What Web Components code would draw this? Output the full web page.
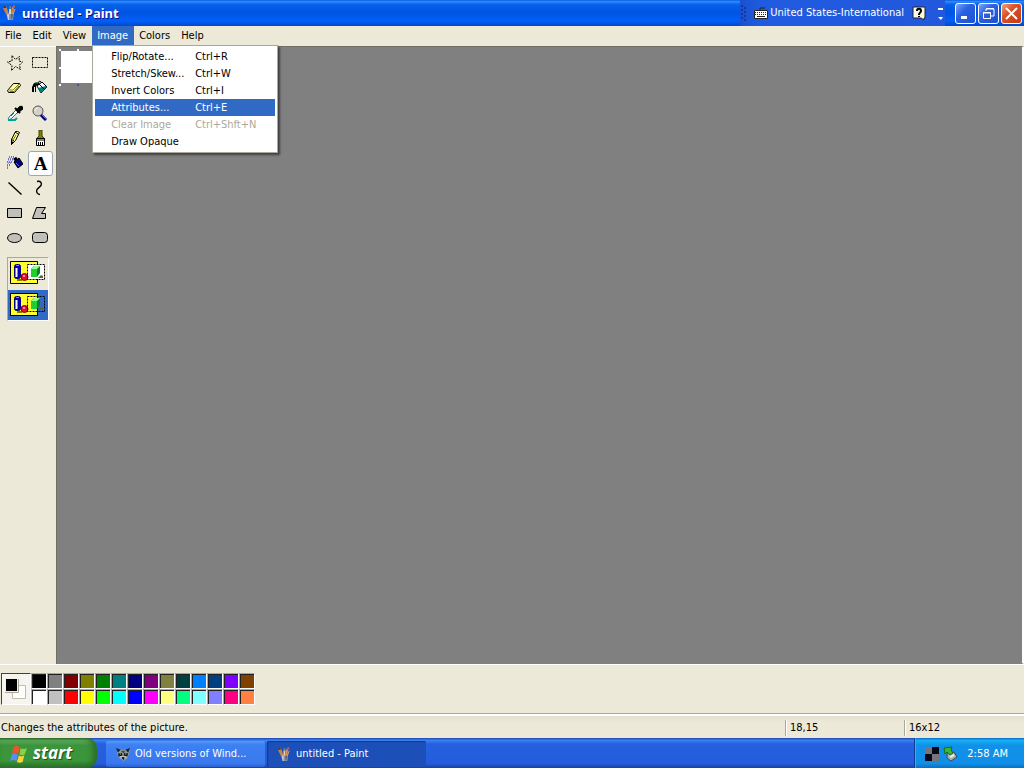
<!DOCTYPE html>
<html lang="en">
<head>
<meta charset="utf-8">
<title>untitled - Paint</title>
<style>
    html, body { height: 100%; }
    body {
        margin: 0;
        overflow: hidden;
        font: 11px/16px "DejaVu Sans Condensed", "Open Sans", sans-serif;
        color: #000;
        --face: #ece9d8;
        --shadow: #aca899;
        --highlight: #316ac5;
    }
</style>
</head>
<body>
<paint-desktop></paint-desktop>

<script>
const ICONS = {
    paint: '<path d="M4 8h8l-1 7H6z" fill="#8a94a8"/><path d="M5 9h2v6H6z" fill="#c8d0dc"/><path d="M9 9h2l-1 5H9z" fill="#566078"/><path d="M3 1l3 8M2 3l3 6" stroke="#c0854a" stroke-width="2"/><path d="M8 3v6" stroke="#e8d8b0" stroke-width="2"/><path d="M11 2l-1 7" stroke="#d88850" stroke-width="2"/><path d="M13 4l-2 5" stroke="#e0a870"/><path d="M2 1h2v2H2z" fill="#503830"/><path d="M7 1h2v3H7z" fill="#5c7890"/><path d="M11 0h2v3h-2z" fill="#ca5038"/>',
    star: '<path d="M5 .5l3.500 4 4-3-.5 4.500 3.500 1-3 3 1 4.500-5-3-4 4 .5-5-4.500-3.500 4.500-1z" fill="none" stroke="#000" stroke-dasharray="2 1"/>',
    select: '<path d="M.5 2.500h15v10H.5z" fill="none" stroke="#000" stroke-dasharray="2 1"/>',
    eraser: '<path d="M.5 10.500l6-7h6l1 2-6 7h-6z" fill="#ffffa0" stroke="#000"/><path d="M1 10h5l6-6" fill="none" stroke="#808040"/><path d="M2 11l5 0 5-6v2l-5 5H3z" fill="#808000"/>',
    fill: '<path d="M5 6l5-4 5 5-6 6z" fill="#fff" stroke="#000"/><path d="M6 8l8-2 1 1-6 6z" fill="#008080"/><path d="M1 5c1-3 5-3 7-1L4 6v6H3V7H2v5H0V7z" fill="#000"/><path d="M7 4l5 5M9 2c-2-2-3 0-2 3" stroke="#000" fill="none"/><path d="M3 3h3" stroke="#008080"/>',
    pick: '<path d="M3 11l6-6 2 2-6 6-3 2-1-1z" fill="#fff" stroke="#008080"/><path d="M1 15h7l2-2" fill="none" stroke="#00a0a0" stroke-width="2"/><path d="M8 3l5 5M10 5l3-3c2-1 3 1 2 2l-4 3z" fill="#000" stroke="#000" stroke-width="2"/><path d="M4 11l3-3" stroke="#008080"/>',
    zoom: '<circle cx="6" cy="6" r="5" fill="#d4d0c8" stroke="#555"/><path d="M3 6c0-2 1-3 3-3" stroke="#fff" fill="none"/><path d="M9 10l5 5" stroke="#000080" stroke-width="3"/><path d="M10 10l5 5" stroke="#6060ff"/>',
    pencil: '<path d="M4.500 9.500l4-8h2l2 1-4 8-4 4z" fill="#ffff90" stroke="#000"/><path d="M8 2l3 2M4 9l3 2" stroke="#000"/><path d="M4 11l3 1-3 3z" fill="#000"/><path d="M9 5l-3 5" stroke="#808000"/>',
    brush: '<path d="M7 0h3v6l3 3H4l3-3z" fill="#808000" stroke="#404000"/><path d="M4.500 8.500h8v7h-8z" fill="#fff" stroke="#000"/><path d="M4 10h9M6.500 12v3M8.500 12v3M10.500 12v3" stroke="#000"/>',
    spray: '<path d="M7 7l5-4 4 6-5 4z" fill="#000080" stroke="#000"/><path d="M7 5l3-2" stroke="#000" stroke-width="3"/><path d="M9 8l3 3" stroke="#6060ff"/><path d="M1 4h7M0 7h6M0 10h3M0 13h2M2 2h5" stroke="#000080" stroke-dasharray="1 1"/><path d="M1 5h6M1 8h3M0 11h2" stroke="#5050ff" stroke-dasharray="1 1"/>',
    line: '<path d="M1.500 2.500l13 12" stroke="#000" stroke-width="1.400"/>',
    curve: '<path d="M5 1.500c4-1 5 2 4 4l-4 4c-1 2 0 5 3 5" fill="none" stroke="#000" stroke-width="1.400"/>',
    rect: '<path d="M.5 3.500h14v9H.5z" fill="#c0c0b8" stroke="#000"/>',
    polygon: '<path d="M4.500 2.500h9l-4 6h4v5H.5z" fill="#c0c0b8" stroke="#000"/>',
    ellipse: '<ellipse cx="7.500" cy="8" rx="7" ry="4.500" fill="#c0c0b8" stroke="#000"/>',
    round: '<rect x=".5" y="2.500" width="15" height="10" rx="3" fill="#c0c0b8" stroke="#000"/>',
    keyboard: '<path d="M1.500 5.500h13v8h-13z" fill="#fff" stroke="#222"/><path d="M2 7.500h12M2 9.500h12" stroke="#222" stroke-dasharray="1 1"/><path d="M4 11.500h8" stroke="#222"/><path d="M7 5V3h5" stroke="#222" fill="none"/>',
    help: '<path d="M2 2h12v11h-1v2l-3-2H2z" fill="#fffbe0" stroke="#223"/><path d="M6 6c0-3 4-3 4 0 0 2-2 1-2 4M8 11v1" fill="none" stroke="#000" stroke-width="2"/>',
    flag: '<path d="M3 3c2-2 4-2 6 0L8 9C6 8 4 8 2 9z" fill="#e8562a"/><path d="M10 4c2 1 4 1 6 0l-2 6c-2 1-3 1-5 0z" fill="#8bd040"/><path d="M1.500 10c2-2 4-1 6 0l-1.500 6c-2-1-4-1-6 0z" fill="#5790ef"/><path d="M8.500 11c2 1 3 1 5 0l-1.500 6c-2 1-4 1-5.500 0z" fill="#fbd33a"/>',
    raccoon: '<path d="M1 2l4 1h5l5-1-1 5-2 5-4 3-4-3-3-5z" fill="#92a0a0"/><path d="M0 1l5 2-3 3zM15 1l-5 2 3 3z" fill="#222"/><path d="M2 7l4-1 1 3-4 1zM13 7l-4-1-1 3 4 1z" fill="#111"/><path d="M5 4h5l-2 3z" fill="#444"/><path d="M4 11l3-1M11 11l-3-1" stroke="#ddd"/><path d="M6 11h3l-1 3z" fill="#000"/><path d="M4 7h1v1H4zM10 7h1v1h-1z" fill="#fff"/>',
    checker: '<path d="M1 1h14v14H1z" fill="#0a0a14"/><path d="M1 1h7v7H1zM8 8h7v7H8z" fill="#77747a"/>',
    eject: '<path d="M5 8l7-2 3 5-6 4-4-3z" fill="#a8b0b8" stroke="#445"/><path d="M8 11l4-2" stroke="#eee" stroke-width="2"/><path d="M2 2l8-1-1 3 2 3-3 2-3-3-2 2z" fill="#38b838" stroke="#167016"/>'
};

const icon = (name, size = 16, box = 16) =>
    `<svg width="${size}" height="${size}" viewBox="0 0 ${box} ${box}" fill="none" aria-hidden="true">${ICONS[name]}</svg>`;

const RESET = `
    * { box-sizing: border-box; }
    :host { box-sizing: border-box; }
    button { font: inherit; color: inherit; margin: 0; padding: 0; border: 0; background: none; }
    svg { display: block; flex: none; }
`;

class PaintElement extends HTMLElement {
    constructor() {
        super();
        this.attachShadow({ mode: 'open' });
    }

    connectedCallback() {
        this.shadowRoot.innerHTML = `<style>${RESET}${this.styles()}</style>${this.markup()}`;
    }
}

class TitleBar extends PaintElement {
    styles() {
        return `
            :host {
                display: flex;
                align-items: center;
                height: 26px;
                padding: 0 2px;
                color: #fff;
                background: linear-gradient(#0a5bdd 0, #2b8bff 6%, #0560e8 18%, #0054e3 50%, #0060f8 80%, #0048c8 100%);
            }
            h1 {
                flex: 1;
                margin: 0 0 0 4px;
                font: bold 13px/18px "Noto Sans", sans-serif;
                text-shadow: 1px 1px #0f1089;
            }
            .language {
                display: flex;
                align-items: center;
                height: 26px;
                margin-right: 10px;
                background: linear-gradient(90deg, #1a50d0, #1f5be0 10%, #2258dc);
            }
            .grip { margin-right: 6px; }
            .language span { margin-left: 1px; }
            .language .help { margin: 0 10px 0 7px; }
            .buttons { display: flex; gap: 2px; }
            .buttons button {
                display: grid;
                place-items: center;
                width: 21px;
                height: 21px;
                border: 1px solid #fff;
                border-radius: 3px;
                background: linear-gradient(135deg, #7ea4f4, #2a62e2 40%, #1d4fd0);
            }
            .buttons .close { background: linear-gradient(135deg, #f0a080, #dc5028 40%, #c03c14); }
        `;
    }

    markup() {
        return `
            ${icon('paint')}
            <h1><slot></slot></h1>
            <div class="language">
                <svg class="grip" width="7" height="16" fill="none" stroke="#123a9c" stroke-dasharray="2 2">
                    <path d="M2 0v16M5 2v14" stroke-width="2"/>
                </svg>
                ${icon('keyboard')}
                <span>United States-International</span>
                <button class="help" aria-label="Help">${icon('help')}</button>
                <svg width="8" height="16"><path d="M1 3h5v2H1zM1 12h5l-2 3z" fill="#fff"/></svg>
            </div>
            <div class="buttons">
                <button aria-label="Minimize"><svg width="15" height="15"><path d="M3 10h6v3H3z" fill="#fff"/></svg></button>
                <button aria-label="Restore"><svg width="15" height="15" fill="none" stroke="#fff"><path d="M5 5V3h8v7h-3M5 2.500h8M2.500 6.500h7v6h-7zM2 7h8"/></svg></button>
                <button class="close" aria-label="Close"><svg width="15" height="15"><path d="M2 2l11 11M13 2l-11 11" stroke="#fff" stroke-width="2"/></svg></button>
            </div>
        `;
    }
}

class MenuPopup extends PaintElement {
    styles() {
        return `
            :host {
                display: block;
                width: 186px;
                padding: 2px;
                border: 1px solid var(--shadow);
                background: #fff;
                color: #000;
                box-shadow: 2px 2px 2px rgba(0, 0, 0, .5);
            }
            button {
                display: grid;
                grid-template-columns: 84px 1fr;
                width: 100%;
                padding-left: 16px;
                line-height: 17px;
                text-align: left;
                white-space: nowrap;
            }
            button.active { background: var(--highlight); color: #fff; }
            button:disabled { color: var(--shadow); }
        `;
    }

    markup() {
        const items = [
            ['Flip/Rotate...', 'Ctrl+R'],
            ['Stretch/Skew...', 'Ctrl+W'],
            ['Invert Colors', 'Ctrl+I'],
            ['Attributes...', 'Ctrl+E', 'class="active"'],
            ['Clear Image', 'Ctrl+Shft+N', 'disabled'],
            ['Draw Opaque', '']
        ];
        return items.map(([label, key, attr = '']) =>
            `<button role="menuitem" ${attr}><span>${label}</span><span>${key}</span></button>`).join('');
    }
}

class MenuBar extends PaintElement {
    styles() {
        return `
            :host {
                display: flex;
                height: 20px;
                background: var(--face);
            }
            .item { position: relative; }
            .item > button { height: 19px; padding: 0 6px 0 5px; line-height: 18px; }
            .item:first-child > button { padding-left: 4px; }
            .item.open > button { background: var(--highlight); color: #fff; }
            menu-popup { position: absolute; top: 100%; left: 0; margin-top: -1px; z-index: 1; }
        `;
    }

    markup() {
        return ['File', 'Edit', 'View', 'Image', 'Colors', 'Help'].map(name => {
            const open = name === 'Image';
            return `<div class="item ${open ? 'open' : ''}"><button>${name}</button>${open ? '<menu-popup role="menu"></menu-popup>' : ''}</div>`;
        }).join('');
    }
}

class ToolBox extends PaintElement {
    styles() {
        return `
            :host {
                display: block;
                width: 56px;
                padding: 4px 3px;
                background: var(--face);
                border-top: 1px solid #fff;
            }
            .tools { display: grid; grid-template-columns: 25px 25px; grid-auto-rows: 25px; }
            .tools button { display: grid; place-items: start; padding: 4px; border-radius: 3px; }
            .tools .active {
                place-items: center;
                padding: 0;
                border: 1px solid #9aa8b4;
                background: #fff;
                font: bold 19px/20px "Liberation Serif", serif;
            }
            .options {
                width: 42px;
                margin: 6px 0 0 4px;
                border: 1px solid;
                border-color: var(--shadow) #fff #fff var(--shadow);
            }
            .options button { display: flex; align-items: flex-start; width: 40px; height: 32px; padding: 2px 0 0 1px; }
            .options .active { height: 30px; background: var(--highlight); }
        `;
    }

    option(name, opaque) {
        return `
            <button aria-label="${name}" class="${opaque ? '' : 'active'}">
                <svg width="38" height="26" fill="none">
                    <path d="M1.500 1.500h27v22h-27z" fill="#ffff30" stroke="#000"/>
                    ${opaque ? '<path d="M18 4h17v15H18z" fill="#fff"/>' : ''}
                    <path d="M8 19h5v2H8z" fill="#808000"/>
                    <rect x="5.500" y="4.500" width="6" height="14" rx="2" fill="#0000c0" stroke="#000080"/>
                    <path d="M7.500 8v9" stroke="#fff" stroke-width="2"/>
                    <path d="M7 5h3v1H7z" fill="#8080ff"/>
                    <circle cx="15.500" cy="17" r="3.500" fill="#e01030" stroke="#800020"/>
                    <path d="M14 15h2v2h-2z" fill="#ff90a0"/>
                    <path d="M29 18h5v-2l-2-1z" fill="#606040"/>
                    <path d="M22 9l3-3h6v7l-3 4h-6z" fill="#108020"/>
                    <path d="M22 9h6v8h-6z" fill="#20d030"/>
                    <path d="M22 9l3-3h6l-3 3z" fill="#90ff90"/>
                    <path d="M18.500 4.500h17v15h-17z" stroke="#000" stroke-dasharray="2 1"/>
                </svg>
            </button>`;
    }

    markup() {
        const tools = ['star', 'select', 'eraser', 'fill', 'pick', 'zoom', 'pencil', 'brush', 'spray', 'text',
            'line', 'curve', 'rect', 'polygon', 'ellipse', 'round'];
        return `
            <div class="tools">
                ${tools.map(name => name === 'text'
                    ? '<button class="active" aria-pressed="true">A</button>'
                    : `<button aria-label="${name}">${icon(name)}</button>`).join('')}
            </div>
            <div class="options">${this.option('Opaque', true)}${this.option('Transparent', false)}</div>
        `;
    }
}

class CanvasArea extends PaintElement {
    styles() {
        return `
            :host {
                display: block;
                flex: 1;
                padding: 2px;
                background: #808080;
                border: solid;
                border-width: 1px 2px 1px 1px;
                border-color: #716f64 #fff #808080 #716f64;
            }
        `;
    }

    markup() {
        return `
            <svg width="38" height="38">
                <path d="M2 2h36v32H2z" fill="#fff"/>
                <path d="M0 0h2v2H0zM18 0h2v2h-2zM0 18h2v2H0zM0 35h2v2H0z" fill="#fff"/>
                <path d="M18 35h2v2h-2z" fill="#3058b0"/>
            </svg>`;
    }
}

class ColorPalette extends PaintElement {
    styles() {
        return `
            :host {
                display: flex;
                height: 50px;
                padding: 8px 1px;
                background: var(--face);
                border-top: 1px solid #fff;
                border-bottom: 1px solid var(--shadow);
            }
            .current, .swatches button {
                border: 1px solid;
                border-color: var(--shadow) #fff #fff var(--shadow);
            }
            .current {
                width: 30px;
                height: 32px;
                background: #f5f4ee;
                border-color: #404040 #fff #fff #404040;
            }
            .swatches { display: grid; grid-template-columns: repeat(14, 16px); grid-auto-rows: 16px; }
            .swatches button { box-shadow: inset 1px 1px #202020; }
        `;
    }

    markup() {
        const colors = [
            '#000000', '#808080', '#800000', '#808000', '#008000', '#008080', '#000080',
            '#800080', '#808040', '#004040', '#0080ff', '#004080', '#8000ff', '#804000',
            '#ffffff', '#c0c0c0', '#ff0000', '#ffff00', '#00ff00', '#00ffff', '#0000ff',
            '#ff00ff', '#ffff80', '#00ff80', '#80ffff', '#8080ff', '#ff0080', '#ff8040'
        ];
        return `
            <div class="current">
                <svg width="28" height="28">
                    <path d="M10.500 11.500h13v13h-13z" fill="#fff" stroke="#c0bcae"/>
                    <path d="M3 4h14v14H3z" fill="#f4f2e8"/>
                    <path d="M3 18.500h13.500V5" fill="none" stroke="#aca899"/>
                    <path d="M4 5h11v12H4z" fill="#000"/>
                </svg>
            </div>
            <div class="swatches">
                ${colors.map(color => `<button aria-label="${color}" style="background:${color}"></button>`).join('')}
            </div>
        `;
    }
}

class StatusBar extends PaintElement {
    styles() {
        return `
            :host {
                display: grid;
                grid-template-columns: 1fr 119px 120px;
                height: 24px;
                padding: 6px 0 2px;
                background: linear-gradient(#fff 2px, #e4e0d0 2px, var(--face) 8px);
            }
            span { padding: 0 1px; }
            span + span { padding-left: 4px; border-left: 1px solid var(--shadow); box-shadow: inset 1px 0 #fff; }
        `;
    }

    markup() {
        return '<span>Changes the attributes of the picture.</span><span>18,15</span><span>16x12</span>';
    }
}

class TaskBar extends PaintElement {
    styles() {
        return `
            :host {
                display: flex;
                height: 30px;
                color: #fff;
                background: linear-gradient(#1f48b0 0, #3c81f0 8%, #2560de 20%, #245ddb 85%, #1941a5 100%);
            }
            .start {
                display: flex;
                align-items: center;
                gap: 4px;
                width: 97px;
                padding-left: 10px;
                border-radius: 0 10px 10px 0;
                background: linear-gradient(#2c6a2c 0, #60b060 8%, #3c943c 25%, #3a973a 75%, #2a702a 100%);
                box-shadow: inset -4px 0 6px #2c6a2c;
                font: italic bold 17px/20px "Open Sans", sans-serif;
                text-shadow: 1px 1px 1px #1c4a1c;
            }
            .tasks { display: flex; flex: 1; gap: 2px; padding: 3px 0 1px 9px; }
            .tasks button {
                display: flex;
                align-items: center;
                gap: 4px;
                width: 159px;
                padding-left: 10px;
                border-radius: 2px;
                background: linear-gradient(#5a98f8, #3c80f2 15%, #3a78ee 85%, #2a62d4);
            }
            .tasks .active { background: #1c4fb8; box-shadow: inset 1px 1px 1px #123a90; }
            .tray {
                display: flex;
                align-items: center;
                gap: 2px;
                width: 110px;
                padding: 2px 16px 0 9px;
                border-left: 1px solid #0a3e96;
                background: linear-gradient(#0c6ac8 0, #18b0f4 8%, #1090e8 25%, #0f8fe8 85%, #0a70c0 100%);
                box-shadow: inset 1px 0 #18bbff;
            }
            time { flex: 1; text-align: right; }
        `;
    }

    markup() {
        return `
            <button class="start">${icon('flag', 19, 18)}start</button>
            <div class="tasks">
                <button>${icon('raccoon', 15)}Old versions of Wind...</button>
                <button class="active">${icon('paint', 15)}untitled - Paint</button>
            </div>
            <div class="tray">${icon('checker')}${icon('eject')}<time>2:58 AM</time></div>
        `;
    }
}

class PaintDesktop extends PaintElement {
    styles() {
        return `
            :host { display: flex; flex-direction: column; min-height: 100vh; background: var(--face); }
            main { display: flex; flex: 1; }
        `;
    }

    markup() {
        return `
            <title-bar>untitled - Paint</title-bar>
            <menu-bar></menu-bar>
            <main>
                <tool-box></tool-box>
                <canvas-area></canvas-area>
            </main>
            <color-palette></color-palette>
            <status-bar></status-bar>
            <task-bar></task-bar>
        `;
    }
}

customElements.define('title-bar', TitleBar);
customElements.define('menu-popup', MenuPopup);
customElements.define('menu-bar', MenuBar);
customElements.define('tool-box', ToolBox);
customElements.define('canvas-area', CanvasArea);
customElements.define('color-palette', ColorPalette);
customElements.define('status-bar', StatusBar);
customElements.define('task-bar', TaskBar);
customElements.define('paint-desktop', PaintDesktop);
</script>
</body>
</html>
